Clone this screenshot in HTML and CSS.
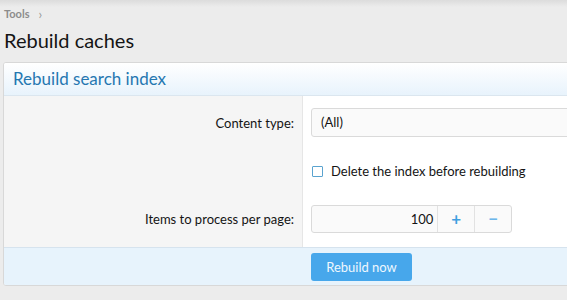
FILE: index.html
```html
<!DOCTYPE html>
<html>
<head>
<meta charset="utf-8">
<link rel="stylesheet" href="styles.css">
</head>
<body>
<div class="page">
  <div class="crumbs"><span class="crumb">Tools</span><span class="chev">›</span></div>
  <h1 class="title">Rebuild caches</h1>
  <div class="block">
    <h2 class="block-header">Rebuild search index</h2>
    <div class="block-body">
      <div class="row row-first">
        <div class="label">Content type:</div>
        <div class="field"><div class="select">(All)</div></div>
      </div>
      <div class="row row-check">
        <div class="label"></div>
        <div class="field"><label class="check"><span class="box"></span>Delete the index before rebuilding</label></div>
      </div>
      <div class="row row-last">
        <div class="label">Items to process per page:</div>
        <div class="field">
          <div class="number">
            <span class="num-val">100</span>
            <span class="num-btn">+</span>
            <span class="num-btn minus">−</span>
          </div>
        </div>
      </div>
    </div>
    <div class="block-footer">
      <button class="btn">Rebuild now</button>
    </div>
  </div>
</div>
</body>
</html>
```
FILE: styles.css
```css
html, body {
  margin: 0;
  padding: 0;
}
body {
  background: #ececec linear-gradient(to bottom, #dcdcdc 0, #ececec 7px) no-repeat;
  background-size: 100% 8px;
  font-family: "Lato", "Open Sans", sans-serif;
  color: #141414;
  overflow: hidden;
}
.page {
  padding: 7px 0 0 3px;
}
.crumbs {
  display: flex;
  align-items: center;
  gap: 9px;
  font-size: 11px;
  line-height: 14px;
  padding-left: 1px;
}
.crumb {
  font-weight: 700;
  color: #8c8c8c;
}
.chev {
  color: #9a9a9a;
  font-size: 13px;
}
.title {
  margin: 6px 0 0 1px;
  font-size: 20px;
  font-weight: 400;
  line-height: 26px;
  color: #141414;
}
.block {
  margin-top: 9px;
  margin-right: -20px;
  border: 1px solid #d8d8d8;
  border-radius: 3px;
  background: #fff;
  overflow: hidden;
}
.block-header {
  margin: 0;
  padding: 5px 9px 5px;
  font-size: 17px;
  font-weight: 400;
  line-height: 22px;
  color: #2577b1;
  background: linear-gradient(to bottom, #ffffff, #e8f3fc);
  border-bottom: 1px solid #dbe6ef;
}
.block-body {
  display: flex;
  flex-direction: column;
  background: linear-gradient(to right, #f5f5f5 0, #f5f5f5 298px, #e6e6e6 298px, #e6e6e6 299px, #fff 299px);
}
.row {
  display: grid;
  grid-template-columns: 299px 1fr;
  align-items: center;
}
.row-first { padding-top: 12px; }
.row-check { padding-top: 24px; }
.row-last { padding-top: 24px; padding-bottom: 14px; }
.label {
  text-align: right;
  padding-right: 9px;
  font-size: 13px;
  line-height: 18px;
}
.field {
  padding-left: 8px;
}
.select {
  height: 27px;
  line-height: 27px;
  border: 1px solid #dadada;
  border-radius: 3px;
  background: #fafafa;
  padding-left: 9px;
  font-size: 13px;
}
.check {
  display: flex;
  align-items: center;
  gap: 8px;
  font-size: 13px;
  line-height: 20px;
  padding-left: 1px;
}
.box {
  width: 9px;
  height: 9px;
  border: 1px solid #5aa3cf;
  border-radius: 1px;
  background: #fff;
}
.number {
  display: flex;
  width: 199px;
  height: 26px;
  border: 1px solid #dadada;
  border-radius: 3px;
  background: #fafafa;
  font-size: 13px;
  line-height: 26px;
}
.num-val {
  width: 122px;
  text-align: right;
  padding-right: 4px;
}
.num-btn {
  width: 36px;
  border-left: 1px solid #e2e2e2;
  text-align: center;
  color: #3f9fe0;
  font-weight: 700;
  font-size: 17px;
}
.num-btn.minus {
  color: #6db6ea;
}
.block-footer {
  background: #e7f3fc;
  border-top: 1px solid #d6e3ee;
  padding: 5px 0 4px 307px;
}
.btn {
  width: 101px;
  height: 28px;
  border: none;
  border-radius: 3px;
  background: #47a7eb;
  color: #eef7fe;
  font-family: "Lato", "Open Sans", sans-serif;
  font-size: 13px;
  padding: 0;
}
```
